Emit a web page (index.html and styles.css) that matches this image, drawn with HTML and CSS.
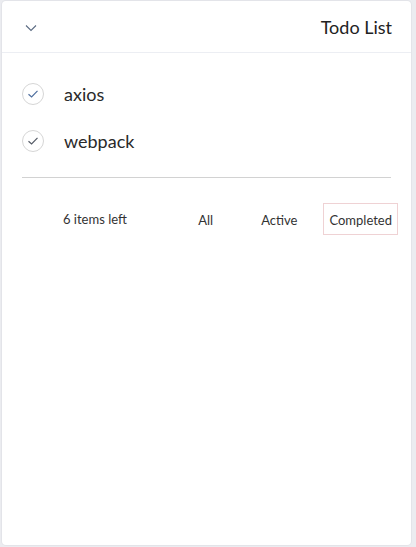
FILE: index.html
```html
<!DOCTYPE html>
<html lang="en">
<head>
<meta charset="utf-8">
<title>Todo List</title>
<link rel="stylesheet" href="styles.css">
</head>
<body>
<div class="card">
  <header class="header">
    <svg class="chevron" width="12" height="8" viewBox="0 0 12 8"><path d="M1 1.5 L6 6.5 L11 1.5" fill="none" stroke="#5b6b82" stroke-width="1.1"/></svg>
    <h1 class="title">Todo List</h1>
  </header>
  <ul class="list">
    <li class="item">
      <span class="check"><svg width="12" height="10" viewBox="0 0 12 10"><path d="M1.5 5.2 L4.6 8 L10.5 1.8" fill="none" stroke="#4f6f9f" stroke-width="1.2"/></svg></span>
      <span class="label">axios</span>
    </li>
    <li class="item">
      <span class="check"><svg width="12" height="10" viewBox="0 0 12 10"><path d="M1.5 5.2 L4.6 8 L10.5 1.8" fill="none" stroke="#555b66" stroke-width="1.2"/></svg></span>
      <span class="label">webpack</span>
    </li>
  </ul>
  <div class="divider"></div>
  <footer class="footer">
    <span class="count">6 items left</span>
    <div class="filters">
      <button class="filter f-all">All</button>
      <button class="filter f-active">Active</button>
      <button class="filter f-completed selected">Completed</button>
    </div>
  </footer>
</div>
</body>
</html>
```
FILE: styles.css
```css
* { box-sizing: border-box; }
html, body { margin: 0; padding: 0; }
body {
  background: #ebecf0;
  font-family: "Lato", "Noto Sans", sans-serif;
  color: #2b2b2b;
  height: 547px;
  overflow: hidden;
}
.card {
  margin: 1px 5px 0 2px;
  height: 544px;
  background: #fff;
  border-radius: 4px;
  box-shadow: 0 0 0 1px #e3e4e9;
}
.header {
  height: 52px;
  border-bottom: 1px solid #eceef3;
  display: flex;
  align-items: center;
  justify-content: space-between;
  padding: 0 19px 0 23px;
}
.chevron { display: block; margin-top: 2px; }
.title {
  margin: 0;
  font-size: 18px;
  font-weight: 400;
  color: #222;
}
.list {
  list-style: none;
  margin: 0;
  padding: 17px 0 0 20px;
}
.item {
  height: 47px;
  display: flex;
  align-items: center;
  gap: 20px;
}
.check {
  width: 22px;
  height: 22px;
  border: 1px solid #d6d6d6;
  border-radius: 50%;
  display: flex;
  align-items: center;
  justify-content: center;
  padding-top: 1px;
}
.check svg { display: block; }
.label {
  font-size: 18px;
  color: #2a2a2a;
}
.divider {
  margin: 13px 20px 0 20px;
  height: 1px;
  background: #d2d2d2;
}
.footer {
  margin-top: 25px;
  display: flex;
  align-items: center;
  padding: 0 13px 0 61px;
  height: 32px;
}
.count {
  flex: 1;
  font-size: 13px;
  color: #333;
  margin-top: -1px;
}
.filters {
  display: flex;
  align-items: center;
}
.filter {
  font-family: inherit;
  font-size: 13px;
  color: #333;
  background: none;
  border: 1px solid transparent;
  border-radius: 0;
  height: 32px;
  padding: 1px 5px 0;
  cursor: pointer;
}
.f-active { margin-left: 36px; }
.f-completed { margin-left: 20px; }
.selected { border-color: #efd2d4; }
```
